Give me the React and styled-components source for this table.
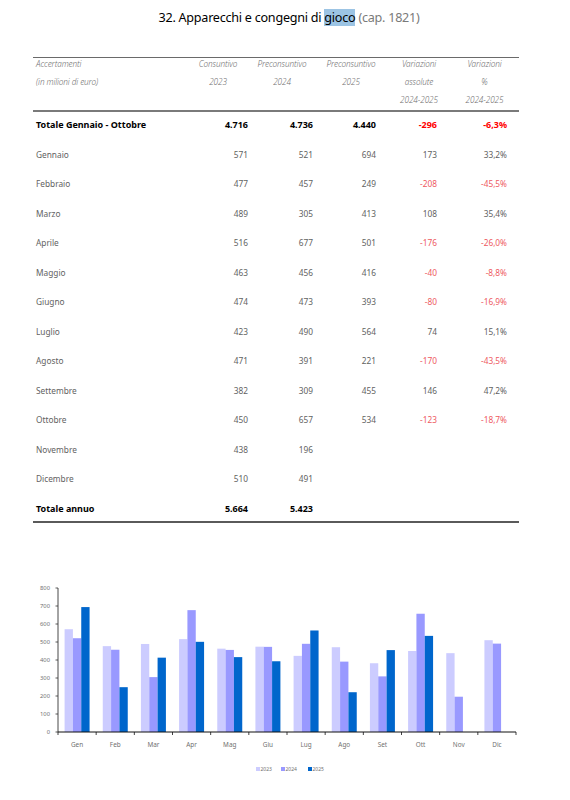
import React from "react";
import styled, { createGlobalStyle } from "styled-components";

const Global = createGlobalStyle`
  html, body { margin: 0; padding: 0; background: #fff; }
  body { font-family: "Noto Sans", "DejaVu Sans", sans-serif; }
`;

const Page = styled.div`
  width: 570px;
  height: 800px;
  display: flex;
  flex-direction: column;
  overflow: hidden;
`;

const Title = styled.h1`
  margin: 10px 0 0 8px;
  text-align: center;
  font-size: 12.6px;
  line-height: 16px;
  font-weight: 400;
  letter-spacing: -0.25px;
  color: #000;
`;

const Hl = styled.span`
  background: #9cc4e4;
`;

const Cap = styled.span`
  color: #7a7a7a;
`;

const Table = styled.div`
  margin: 31px 0 0 33px;
  width: 486px;
  border-top: 1px solid #6a6a6a;
`;

const cols = "153px 64px 64px 74px 62px 69px";

const Header = styled.div`
  display: grid;
  grid-template-columns: ${cols};
  grid-auto-rows: 12px;
  row-gap: 6px;
  padding-bottom: 4px;
  border-bottom: 2px solid #7a7a7a;
`;

const HCell = styled.div`
  font-size: 8.2px;
  line-height: 12px;
  font-style: italic;
  font-weight: 300;
  letter-spacing: -0.1px;
  color: #6f6f6f;
  text-align: ${(p) => (p.$left ? "left" : "center")};
  padding-left: ${(p) => (p.$left ? "3px" : "0")};
  white-space: nowrap;
`;

const Row = styled.div`
  display: grid;
  grid-template-columns: ${cols};
  padding: 7px 0 ${(p) => (p.$last ? "6px" : "10.5px")};
`;

const Cell = styled.div`
  font-size: ${(p) => (p.$bold ? "9px" : "8.3px")};
  line-height: 12px;
  font-weight: ${(p) => (p.$bold ? 700 : 400)};
  color: ${(p) =>
    p.$neg ? (p.$bold ? "#ff0000" : "#ee5a5f") : p.$bold ? "#000" : "#626262"};
  text-align: ${(p) => (p.$label ? "left" : "right")};
  padding-left: ${(p) => (p.$label ? "3px" : "0")};
  padding-right: ${(p) => p.$pr || 0}px;
  white-space: nowrap;
`;

const Bottom = styled.div`
  border-top: 2px solid #5a5a5a;
`;

const ChartWrap = styled.div`
  margin-top: 52px;
  width: 570px;
  height: 215px;
`;

const pads = [2, 1, 12, 13, 12];

const rows = [
  { l: "Totale Gennaio - Ottobre", v: ["4.716", "4.736", "4.440", "-296", "-6,3%"], b: true },
  { l: "Gennaio", v: ["571", "521", "694", "173", "33,2%"] },
  { l: "Febbraio", v: ["477", "457", "249", "-208", "-45,5%"] },
  { l: "Marzo", v: ["489", "305", "413", "108", "35,4%"] },
  { l: "Aprile", v: ["516", "677", "501", "-176", "-26,0%"] },
  { l: "Maggio", v: ["463", "456", "416", "-40", "-8,8%"] },
  { l: "Giugno", v: ["474", "473", "393", "-80", "-16,9%"] },
  { l: "Luglio", v: ["423", "490", "564", "74", "15,1%"] },
  { l: "Agosto", v: ["471", "391", "221", "-170", "-43,5%"] },
  { l: "Settembre", v: ["382", "309", "455", "146", "47,2%"] },
  { l: "Ottobre", v: ["450", "657", "534", "-123", "-18,7%"] },
  { l: "Novembre", v: ["438", "196", "", "", ""] },
  { l: "Dicembre", v: ["510", "491", "", "", ""] },
  { l: "Totale annuo", v: ["5.664", "5.423", "", "", ""], b: true, last: true },
];

const months = ["Gen", "Feb", "Mar", "Apr", "Mag", "Giu", "Lug", "Ago", "Set", "Ott", "Nov", "Dic"];
const s23 = [571, 477, 489, 516, 463, 474, 423, 471, 382, 450, 438, 510];
const s24 = [521, 457, 305, 677, 456, 473, 490, 391, 309, 657, 196, 491];
const s25 = [694, 249, 413, 501, 416, 393, 564, 221, 455, 534, null, null];
const colors = ["#ccccff", "#9999ff", "#0066cc"];

function Chart() {
  const oy = 575;
  const x0 = 58;
  const x1 = 516;
  const y0 = 732 - oy;
  const k = 0.18;
  const cw = (x1 - x0) / 12;
  const bw = 8.33;
  const series = [s23, s24, s25];
  return (
    <svg width="570" height="215" viewBox="0 0 570 215">
      {[0, 100, 200, 300, 400, 500, 600, 700, 800].map((v) => (
        <g key={v}>
          <text
            x="50"
            y={y0 - v * k + 2}
            fontSize="5.8"
            fill="#707070"
            textAnchor="end"
            fontFamily="Noto Sans, sans-serif"
          >
            {v}
          </text>
          <line x1={x0 - 2.5} x2={x0} y1={y0 - v * k} y2={y0 - v * k} stroke="#333" strokeWidth="0.8" />
        </g>
      ))}
      {series.map((s, si) =>
        s.map((v, i) =>
          v == null ? null : (
            <rect
              key={si + "-" + i}
              x={x0 + cw * (i + 0.5) - 1.5 * bw + si * bw}
              y={y0 - v * k}
              width={bw}
              height={v * k}
              fill={colors[si]}
            />
          )
        )
      )}
      <line x1={x0} x2={x0} y1={y0 - 800 * k} y2={y0} stroke="#333" strokeWidth="0.9" />
      <line x1={x0} x2={x1} y1={y0} y2={y0} stroke="#111" strokeWidth="1" />
      {Array.from({ length: 13 }).map((_, i) => (
        <line key={i} x1={x0 + cw * i} x2={x0 + cw * i} y1={y0} y2={y0 + 3} stroke="#111" strokeWidth="0.8" />
      ))}
      {months.map((m, i) => (
        <text
          key={m}
          x={x0 + cw * (i + 0.5)}
          y={y0 + 15}
          fontSize="6.4"
          fill="#707070"
          textAnchor="middle"
          fontFamily="Noto Sans, sans-serif"
        >
          {m}
        </text>
      ))}
      {["2023", "2024", "2025"].map((t, i) => {
        const lx = [256, 281, 308][i];
        return (
          <g key={t}>
            <rect x={lx} y={769 - oy - 2} width="4" height="4" fill={colors[i]} />
            <text x={lx + 4.5} y={769 - oy + 1.8} fontSize="5" fill="#707070" fontFamily="Noto Sans, sans-serif">
              {t}
            </text>
          </g>
        );
      })}
    </svg>
  );
}

export default function App() {
  return (
    <Page>
      <Global />
      <Title>
        32. Apparecchi e congegni di <Hl>gioco</Hl> <Cap>(cap. 1821)</Cap>
      </Title>
      <Table>
        <Header>
          <HCell $left>Accertamenti</HCell>
          <HCell>Consuntivo</HCell>
          <HCell>Preconsuntivo</HCell>
          <HCell>Preconsuntivo</HCell>
          <HCell>Variazioni</HCell>
          <HCell>Variazioni</HCell>
          <HCell $left>(in milioni di euro)</HCell>
          <HCell>2023</HCell>
          <HCell>2024</HCell>
          <HCell>2025</HCell>
          <HCell>assolute</HCell>
          <HCell>%</HCell>
          <HCell />
          <HCell />
          <HCell />
          <HCell />
          <HCell>2024-2025</HCell>
          <HCell>2024-2025</HCell>
        </Header>
        {rows.map((r) => (
          <Row key={r.l} $last={r.last}>
            <Cell $label $bold={r.b}>
              {r.l}
            </Cell>
            {r.v.map((v, i) => (
              <Cell key={i} $bold={r.b} $pr={pads[i]} $neg={v.startsWith("-")}>
                {v}
              </Cell>
            ))}
          </Row>
        ))}
        <Bottom />
      </Table>
      <ChartWrap>
        <Chart />
      </ChartWrap>
    </Page>
  );
}
